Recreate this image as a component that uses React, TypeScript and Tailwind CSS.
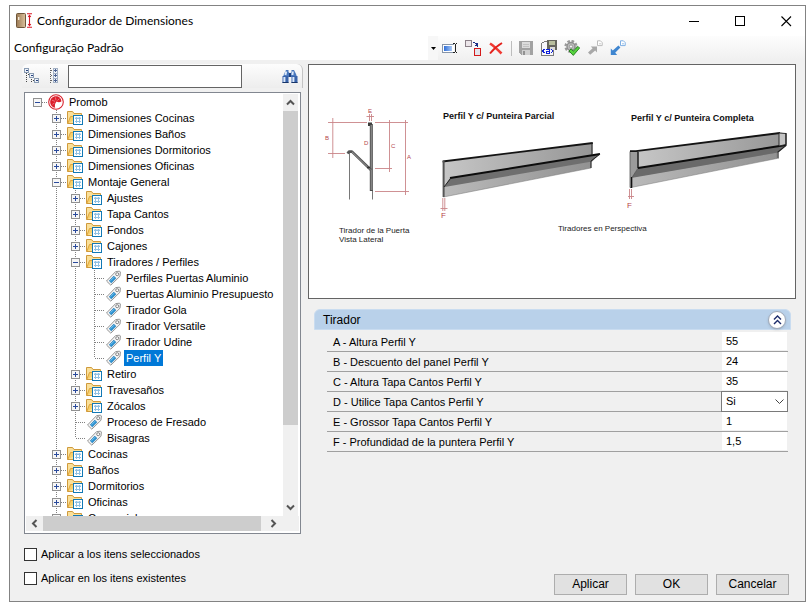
import React from "react";

type Kind = "root" | "folder" | "tag";

interface TreeRow {
  label: string;
  depth: number;
  kind: Kind;
  toggle?: "+" | "-";
  // For each level from 0 to depth: does its line go on below this row?
  rails: boolean[];
  selected?: boolean;
}

const ROWS: TreeRow[] = [
  { label: "Promob", depth: 0, kind: "root", toggle: "-", rails: [false] },
  { label: "Dimensiones Cocinas", depth: 1, kind: "folder", toggle: "+", rails: [false, true] },
  { label: "Dimensiones Baños", depth: 1, kind: "folder", toggle: "+", rails: [false, true] },
  { label: "Dimensiones Dormitorios", depth: 1, kind: "folder", toggle: "+", rails: [false, true] },
  { label: "Dimensiones Oficinas", depth: 1, kind: "folder", toggle: "+", rails: [false, true] },
  { label: "Montaje General", depth: 1, kind: "folder", toggle: "-", rails: [false, true] },
  { label: "Ajustes", depth: 2, kind: "folder", toggle: "+", rails: [false, true, true] },
  { label: "Tapa Cantos", depth: 2, kind: "folder", toggle: "+", rails: [false, true, true] },
  { label: "Fondos", depth: 2, kind: "folder", toggle: "+", rails: [false, true, true] },
  { label: "Cajones", depth: 2, kind: "folder", toggle: "+", rails: [false, true, true] },
  { label: "Tiradores / Perfiles", depth: 2, kind: "folder", toggle: "-", rails: [false, true, true] },
  { label: "Perfiles Puertas Aluminio", depth: 3, kind: "tag", rails: [false, true, true, true] },
  { label: "Puertas Aluminio Presupuesto", depth: 3, kind: "tag", rails: [false, true, true, true] },
  { label: "Tirador Gola", depth: 3, kind: "tag", rails: [false, true, true, true] },
  { label: "Tirador Versatile", depth: 3, kind: "tag", rails: [false, true, true, true] },
  { label: "Tirador Udine", depth: 3, kind: "tag", rails: [false, true, true, true] },
  { label: "Perfil Y", depth: 3, kind: "tag", rails: [false, true, true, false], selected: true },
  { label: "Retiro", depth: 2, kind: "folder", toggle: "+", rails: [false, true, true] },
  { label: "Travesaños", depth: 2, kind: "folder", toggle: "+", rails: [false, true, true] },
  { label: "Zócalos", depth: 2, kind: "folder", toggle: "+", rails: [false, true, true] },
  { label: "Proceso de Fresado", depth: 2, kind: "tag", rails: [false, true, true] },
  { label: "Bisagras", depth: 2, kind: "tag", rails: [false, true, false] },
  { label: "Cocinas", depth: 1, kind: "folder", toggle: "+", rails: [false, true] },
  { label: "Baños", depth: 1, kind: "folder", toggle: "+", rails: [false, true] },
  { label: "Dormitorios", depth: 1, kind: "folder", toggle: "+", rails: [false, true] },
  { label: "Oficinas", depth: 1, kind: "folder", toggle: "+", rails: [false, true] },
  { label: "Comercial", depth: 1, kind: "folder", toggle: "+", rails: [false, true] },
];

const FIELDS = [
  { id: "a", label: "A - Altura Perfil Y", value: "55" },
  { id: "b", label: "B - Descuento del panel Perfil Y", value: "24" },
  { id: "c", label: "C - Altura Tapa Cantos Perfil Y", value: "35" },
  { id: "d", label: "D - Utilice Tapa Cantos Perfil Y", value: "Si", options: ["Si", "No"] },
  { id: "e", label: "E - Grossor Tapa Cantos Perfil Y", value: "1" },
  { id: "f", label: "F - Profundidad de la puntera Perfil Y", value: "1,5" },
];

/* ---------- tree ---------- */

function Rail({ row, level }: { row: TreeRow; level: number }) {
  const own = level === row.depth;
  const below = row.rails[level];
  return (
    <svg width="19" height="16" className="shrink-0" shapeRendering="crispEdges">
      <g stroke="#808080" strokeDasharray="1 1">
        {(below || own) && level > 0 && <path d={below ? "M9.5 0V16" : "M9.5 0V8"} />}
        {own && <path d="M10 8.5H19" />}
      </g>
      {own && row.toggle && (
        <g>
          <rect x="5.5" y="4.5" width="8" height="8" fill="#f6f6f6" stroke="#919191" />
          <path d={row.toggle === "+" ? "M7 8.5H12M9.5 6V11" : "M7 8.5H12"} stroke="#2a4a9c" />
        </g>
      )}
    </svg>
  );
}

function RootIcon() {
  return (
    <svg width="20" height="16" viewBox="0 0 20 16">
      <circle cx="9" cy="8" r="7.3" fill="#fff" stroke="#d8232e" strokeWidth="1.1" />
      <path d="M9.6 7.6C11.2 8.6 12.8 8.4 14.4 7.6C14.4 4.2 12 2.2 9 2.2C5.6 2.2 3.2 4.8 3.2 8C3.2 11 5.2 13.4 8.2 13.8C7.6 12 7.8 9.4 9.6 7.6Z" fill="#dc1f2c" />
      <path d="M5 6.2L8 7.4M8.4 3.4L9 6.4M5.4 10.4L7.6 9M12.4 4.6L10.4 6.6" stroke="#f3949b" strokeWidth="0.7" />
    </svg>
  );
}

function FolderIcon() {
  return (
    <svg width="20" height="16" viewBox="0 0 20 16">
      <path d="M1.5 13.5V1.5H7L8.5 3.5H15V13.5Z" fill="#fae09a" />
      <path d="M1.5 13.5V1.5H6.5L8 3.5H15.5V6" fill="none" stroke="#cf9a3c" />
      <path d="M1.8 13.5L4.5 6.5H9L10.5 5.5H16" fill="#f7cf6a" stroke="#dfa63f" />
      <path d="M1.5 13.5H8" stroke="#cf9a3c" />
      <rect x="7.5" y="5.5" width="9" height="9" fill="#fff" stroke="#1279b5" />
      <path d="M9 7.5H15" stroke="#cfe3f3" />
      <path d="M9 8.5H15M9 11.5H15M10.5 7V13M13.5 7V13" stroke="#8fc1e4" />
    </svg>
  );
}

function TagIcon() {
  return (
    <svg width="20" height="16" viewBox="0 0 20 16">
      <path d="M2.5 11L11.6 1.6L15.6 1.2L16.4 2L16 6.2L6.8 15.2Z" fill="#f4f4f4" stroke="#8a8a8a" strokeWidth="0.9" />
      <path d="M5.2 10.8L9.8 6.1L12 8.3L7.3 12.9Z" fill="#2b93d3" stroke="#1d6fa8" strokeWidth="0.5" />
      <path d="M6.6 10.6L10 7.2" stroke="#8fd0f4" strokeWidth="0.8" />
      <circle cx="13.2" cy="4.2" r="1.5" fill="#fff" stroke="#777" strokeWidth="0.9" />
    </svg>
  );
}

function TreeItem({ row }: { row: TreeRow }) {
  return (
    <li className="flex h-4 items-center" role="treeitem" aria-level={row.depth + 1} aria-selected={!!row.selected}>
      {row.rails.map((_, level) => (
        <Rail key={level} row={row} level={level} />
      ))}
      {row.kind === "root" ? <RootIcon /> : row.kind === "folder" ? <FolderIcon /> : <TagIcon />}
      <span className={row.selected ? "h-4 bg-[#0078d7] px-0.5 leading-4 whitespace-nowrap text-white" : "h-4 px-0.5 leading-4 whitespace-nowrap"}>
        {row.label}
      </span>
    </li>
  );
}

function Arrow({ d }: { d: string }) {
  return (
    <svg width="9" height="9" viewBox="0 0 9 9" fill="none" stroke="#555" strokeWidth="2">
      <path d={d} />
    </svg>
  );
}

function Tree() {
  return (
    <div className="mx-0.5 mt-1 flex min-h-0 flex-1 flex-col border border-[#828790] bg-white p-px pb-0.5">
      <div className="flex min-h-0 flex-1">
        <ul className="min-w-0 flex-1 overflow-hidden pl-0.5" role="tree">
          {ROWS.map((row) => (
            <TreeItem key={row.label} row={row} />
          ))}
        </ul>
        <div className="mr-px flex w-[15px] flex-col items-center bg-[#f0f0f0]">
          <button aria-label="Subir" className="flex h-[17px] w-full items-center justify-center"><Arrow d="M1 6.5L4.5 3L8 6.5" /></button>
          <div className="w-full flex-[314] bg-[#cdcdcd]" />
          <div className="flex-[74]" />
          <button aria-label="Bajar" className="flex h-[17px] w-full items-center justify-center"><Arrow d="M1 2.5L4.5 6L8 2.5" /></button>
        </div>
      </div>
      <div className="flex h-[15px] bg-[#f0f0f0]">
        <button aria-label="Izquierda" className="flex w-[17px] items-center justify-center"><Arrow d="M6.5 1L3 4.5L6.5 8" /></button>
        <div className="flex-1 bg-[#cdcdcd]" />
        <button aria-label="Derecha" className="mr-[14px] flex w-6 items-center justify-center"><Arrow d="M2.5 1L6 4.5L2.5 8" /></button>
      </div>
    </div>
  );
}

/* ---------- toolbar icons ---------- */

function RenameIcon() {
  return (
    <svg width="16" height="16" viewBox="0 0 16 16" shapeRendering="crispEdges">
      <defs>
        <linearGradient id="ren" x1="0" x2="1"><stop stopColor="#2f6fd8" /><stop offset="1" stopColor="#a9c8f5" /></linearGradient>
      </defs>
      <path d="M12 4.5H0.5V12.5H12" fill="#fff" stroke="#8795a8" />
      <rect x="2" y="6" width="8" height="5" fill="url(#ren)" />
      <path d="M11 3.5H12.5M13.5 3.5H15M13 4V12M11 12.5H12.5M13.5 12.5H15" stroke="#222" />
    </svg>
  );
}

function ReplaceIcon() {
  return (
    <svg width="16" height="16" viewBox="0 0 16 16" shapeRendering="crispEdges">
      <rect x="0.5" y="0.5" width="6" height="6" fill="#ece6ea" stroke="#8b8088" />
      <rect x="9.5" y="8.5" width="6" height="7" fill="#e4e4ec" stroke="#d31a1a" />
      <path d="M8 2.5H10M10 3.5H12M12.5 3V7M10 5.5H12M11 4.5H13" stroke="#1b2f86" />
    </svg>
  );
}

function DeleteIcon() {
  return (
    <svg width="16" height="16" viewBox="0 0 16 16">
      <path d="M2 3.5C6 6 9.5 9.5 13.5 13.5" stroke="#f03a33" strokeWidth="2.6" fill="none" />
      <path d="M14 3C9.5 5.5 6 8.5 2 13.5" stroke="#e3211c" strokeWidth="2" fill="none" />
    </svg>
  );
}

function SaveIcon() {
  return (
    <svg width="16" height="16" viewBox="0 0 16 16" shapeRendering="crispEdges">
      <path d="M1 1H15V15H3L1 13Z" fill="#a2a2a2" />
      <rect x="4" y="2" width="8" height="6" fill="#dcdcdc" />
      <rect x="4" y="10" width="8" height="5" fill="#d0d0d0" />
      <rect x="5" y="11" width="2" height="4" fill="#929292" />
      <path d="M5 4.5H11M5 6.5H11" stroke="#c2c2c2" />
    </svg>
  );
}

function SaveAsIcon() {
  return (
    <svg width="16" height="16" viewBox="0 0 16 16" shapeRendering="crispEdges">
      <path d="M0.5 3.5L3.5 1.5H12.5V15.5H0.5Z" fill="#f7f7fb" stroke="#7b7b7b" />
      <rect x="6" y="0" width="10" height="10" fill="#66665e" />
      <rect x="8" y="1" width="6" height="4" fill="#b9bf9e" />
      <rect x="9" y="7" width="5" height="3" fill="#dadada" />
      <path d="M3.5 9L1.5 11L3.5 13M5 9.5H8.5V13H5.5V11.5H8.5M10 9L12 11L10 13" fill="none" stroke="#1022d8" />
    </svg>
  );
}

function ApplyIcon() {
  return (
    <svg width="16" height="16" viewBox="0 0 16 16">
      <circle cx="7" cy="6.5" r="5.5" fill="none" stroke="#9a9a9a" strokeWidth="2.2" strokeDasharray="2.6 1.7" />
      <circle cx="7" cy="6.5" r="4" fill="#bdbdbd" stroke="#8e8e8e" strokeWidth="1.4" />
      <circle cx="7" cy="6.5" r="1.6" fill="#f5f5f5" stroke="#808080" strokeWidth="0.7" />
      <path d="M5 11L7.2 8.8L9.2 11.2L14 6.4L15.6 8L9.3 15.4Z" fill="#57d43f" stroke="#237a1c" strokeWidth="0.9" />
    </svg>
  );
}

function PageGlyph({ stroke }: { stroke: string }) {
  return (
    <g>
      <path d="M10.5 0.8H13.4L15.2 2.6V5.6H10.5Z" fill="#fff" stroke={stroke} />
      <path d="M12 3.8H14" stroke={stroke} strokeWidth="0.8" />
    </g>
  );
}

function ExportIcon() {
  return (
    <svg width="16" height="16" viewBox="0 0 16 16">
      <path d="M1 12.4L5.6 8.2L3.8 6.4H10V12.4L8.2 10.6L3.2 14.8Z" fill="#a8a8a8" />
      <PageGlyph stroke="#bcbcbc" />
    </svg>
  );
}

function ImportIcon() {
  return (
    <svg width="16" height="16" viewBox="0 0 16 16">
      <path d="M0.8 15V8.6L2.8 10.4L8.4 5.4L10.4 7.4L5.2 12.8L7.2 15Z" fill="#3f86d0" />
      <PageGlyph stroke="#7fb0e4" />
    </svg>
  );
}

function ToolButton({ label, children }: { label: string; children: React.ReactNode }) {
  return (
    <button aria-label={label} className="flex h-6 w-[23px] shrink-0 items-center justify-center">
      {children}
    </button>
  );
}

/* ---------- title bar ---------- */

function AppIcon() {
  return (
    <svg width="17" height="16" viewBox="0 0 17 16">
      <defs>
        <linearGradient id="door" x1="0" x2="1"><stop stopColor="#9b7a55" /><stop offset="1" stopColor="#dcc29c" /></linearGradient>
      </defs>
      <rect x="0.5" y="0.5" width="9" height="14" rx="1" fill="url(#door)" stroke="#6f563a" />
      <rect x="2" y="4" width="1.4" height="3" fill="#f4ead9" />
      <path d="M11 0.8H16M11 14.2H16M13.5 2V13M12.2 4L13.5 2.4L14.8 4M12.2 11L13.5 12.6L14.8 11" stroke="#d61a26" strokeWidth="1.1" fill="none" />
    </svg>
  );
}

function TitleBar() {
  return (
    <header className="flex h-[30px] shrink-0 items-center bg-white pl-1.5 font-['Lato','Open_Sans',sans-serif] text-xs text-black">
      <AppIcon />
      <h1 className="ml-1 flex-1">Configurador de Dimensiones</h1>
      <div className="flex gap-2">
        <button aria-label="Minimizar" className="flex h-7 w-[38px] items-center justify-center">
          <svg width="11" height="11" shapeRendering="crispEdges"><path d="M0 5.5H10" stroke="#000" /></svg>
        </button>
        <button aria-label="Maximizar" className="flex h-7 w-[38px] items-center justify-center">
          <svg width="11" height="11" shapeRendering="crispEdges"><rect x="0.5" y="0.5" width="9" height="9" fill="none" stroke="#000" /></svg>
        </button>
        <button aria-label="Cerrar" className="flex h-7 w-[38px] items-center justify-center">
          <svg width="11" height="11"><path d="M0.5 0.5L10 10M10 0.5L0.5 10" stroke="#000" strokeWidth="1.1" /></svg>
        </button>
      </div>
    </header>
  );
}

function Toolbar() {
  return (
    <div className="flex h-6 shrink-0 items-center bg-linear-to-b from-[#fdfdfd] to-[#f0f0f0]">
      <div className="relative h-6 w-[428px]">
        <select aria-label="Configuración" className="h-6 w-full appearance-none bg-white pl-1 font-['Lato','Open_Sans',sans-serif] text-xs text-black">
          <option>Configuração Padrão</option>
        </select>
        <span className="pointer-events-none absolute inset-y-0 right-0 flex w-2.5 items-center justify-center bg-[#f7f7f7]">
          <svg width="5" height="3"><path d="M0 0H5L2.5 3Z" fill="#000" /></svg>
        </span>
      </div>
      <ToolButton label="Renombrar"><RenameIcon /></ToolButton>
      <ToolButton label="Reemplazar"><ReplaceIcon /></ToolButton>
      <ToolButton label="Eliminar"><DeleteIcon /></ToolButton>
      <div className="mr-0.5 ml-1 h-[15px] w-px bg-[#bdbdbd]" />
      <ToolButton label="Guardar"><SaveIcon /></ToolButton>
      <ToolButton label="Guardar como"><SaveAsIcon /></ToolButton>
      <ToolButton label="Aplicar configuración"><ApplyIcon /></ToolButton>
      <ToolButton label="Exportar"><ExportIcon /></ToolButton>
      <ToolButton label="Importar"><ImportIcon /></ToolButton>
    </div>
  );
}

/* ---------- left side ---------- */

function CollapseIcon() {
  return (
    <svg width="16" height="16" viewBox="0 0 16 16" shapeRendering="crispEdges" fill="#eef3fa">
      <path d="M2.5 5V15M4 6.5H6M7.5 9V15M9 12.5H11" stroke="#444" strokeDasharray="1 1" />
      <rect x="0.5" y="0.5" width="4" height="4" stroke="#8a9cb3" />
      <rect x="5.5" y="5.5" width="4" height="4" stroke="#8a9cb3" />
      <rect x="10.5" y="10.5" width="4" height="4" stroke="#8a9cb3" />
      <path d="M2 2.5H4M7 7.5H9M12 12.5H14" stroke="#27427e" />
    </svg>
  );
}

function ExpandIcon() {
  return (
    <svg width="10" height="16" viewBox="0 0 10 16" shapeRendering="crispEdges" fill="#eef3fa">
      <path d="M1.5 0V15M2 2.5H4M2 7.5H4M2 12.5H4" stroke="#666" strokeDasharray="1 1" />
      <path d="M4.5 0.5H8.5V14.5H4.5ZM4 5.5H9M4 10.5H9" stroke="#a3b1c4" />
      <path d="M5 2.5H8M6.5 1V4M5 7.5H8M6.5 6V9M5 12.5H8M6.5 11V14" stroke="#4a6090" />
    </svg>
  );
}

function BinocularsIcon() {
  return (
    <svg width="16" height="15" viewBox="0 0 16 15">
      <path d="M2 5L4 1H6.5V3L7.5 4V8H1Z" fill="#4a78bd" />
      <path d="M14 5L12 1H9.5V3L8.5 4V8H15Z" fill="#4a78bd" />
      <path d="M0.5 7H6.5V14H0.5ZM9.5 7H15.5V14H9.5Z" fill="#3a64ab" />
      <path d="M7 4H9V8H7Z" fill="#1e3f7d" />
      <path d="M2.4 8V13M11.4 8V13M4.2 2.5L3.4 6M10.8 2.5L10.4 6" stroke="#dbe8fa" strokeWidth="2" />
      <path d="M0.5 13.5H6.5M9.5 13.5H15.5" stroke="#173468" />
    </svg>
  );
}

function CheckRow({ id, label }: { id: string; label: string }) {
  return (
    <div className="flex h-6 items-center">
      <input id={id} type="checkbox" className="size-[13px] appearance-none border border-[#333] bg-white checked:bg-[#0078d7]" />
      <label htmlFor={id} className="pl-1">{label}</label>
    </div>
  );
}

function LeftPane() {
  return (
    <section className="flex min-h-0 w-[281px] shrink-0 flex-col">
      <div className="flex h-6 shrink-0 items-center rounded-md rounded-b-none border-r border-[#c4c4c4] bg-linear-to-b from-[#fdfdfd] to-[#ededed] pr-1">
        <button aria-label="Contraer todo" className="flex w-5 justify-center"><CollapseIcon /></button>
        <button aria-label="Expandir todo" className="ml-1 flex w-4 justify-center"><ExpandIcon /></button>
        <input aria-label="Buscar" className="ml-1.5 h-[23px] w-[174px] border border-[#646464] bg-white px-1 outline-none" />
        <button aria-label="Buscar siguiente" className="ml-auto"><BinocularsIcon /></button>
      </div>
      <Tree />
      <div className="mt-2 mb-[11px] ml-0.5">
        <CheckRow id="sel" label="Aplicar a los itens seleccionados" />
        <CheckRow id="exi" label="Aplicar en los itens existentes" />
      </div>
    </section>
  );
}

/* ---------- right side ---------- */

function ProfileDrawing() {
  return (
    <svg viewBox="309 65 486 233" className="h-[233px] w-full font-['Liberation_Sans',Arial,sans-serif]" preserveAspectRatio="xMinYMin meet">
      <defs>
        <linearGradient id="plate" x1="0" x2="1"><stop stopColor="#c6c6c6" /><stop offset="1" stopColor="#969696" /></linearGradient>
        <linearGradient id="base" x1="0" x2="1"><stop stopColor="#bababa" /><stop offset="1" stopColor="#929292" /></linearGradient>
      </defs>

      {/* side view: dimension lines */}
      <g stroke="#c98488" strokeWidth="0.9" fill="none">
        <path d="M328 122.5H367M375 122.5H408M332.8 118V158M328 153.5H345" />
        <path d="M389.5 120V172M375 168.5H392M405.5 120V195M375 191.5H409" />
        <path d="M366.5 116.5H374M369.5 114V121M371.5 114V121" />
      </g>
      <g fill="#b5454a" fontSize="6">
        <text x="368" y="113">E</text>
        <text x="325" y="140">B</text>
        <text x="364" y="145">D</text>
        <text x="391" y="148">C</text>
        <text x="407" y="159">A</text>
      </g>

      {/* side view: profile */}
      <path d="M349.5 153V199.5M372.5 190V199.5" stroke="#555" strokeWidth="0.8" />
      <path d="M371.3 124V191" stroke="#4a4a4a" strokeWidth="3" />
      <path d="M371.3 125V190" stroke="#858585" strokeWidth="1.4" />
      <path d="M369 126V123.5H372" stroke="#3c3c3c" strokeWidth="2" fill="none" />
      <path d="M347.5 153.5L349 151.6H352L371 170" stroke="#555" strokeWidth="2.6" fill="none" strokeLinejoin="round" />
      <path d="M352 151.8L370.5 169.8" stroke="#999" strokeWidth="1" />
      <path d="M367 167.5H370" stroke="#333" strokeWidth="1.6" />
      <g fontSize="8" fill="#222">
        <text x="339" y="233">Tirador de la Puerta</text>
        <text x="339" y="242">Vista Lateral</text>
        <text x="558" y="231">Tiradores en Perspectiva</text>
      </g>
      <g fontSize="9" fontWeight="bold" fill="#111">
        <text x="443" y="119">Perfil Y c/ Punteira Parcial</text>
        <text x="631" y="121">Perfil Y c/ Punteira Completa</text>
      </g>

      {/* perspective, partial end cap */}
      <path d="M443 162L592.5 143V161L444 187Z" fill="url(#plate)" />
      <path d="M443.5 186L591 160V168L443.5 197Z" fill="url(#base)" stroke="#777" strokeWidth="0.5" />
      <path d="M450 178L600 154L592 161.5L444.5 187Z" fill="#6f6f6f" />
      <path d="M442.6 161.5L592.8 143" stroke="#141414" strokeWidth="1.8" />
      <path d="M450 178L600 154" stroke="#0c0c0c" strokeWidth="2" />
      <path d="M443.6 161V197" stroke="#555" strokeWidth="2" />
      <path d="M444 187L450.5 178.5M592 143V155M600 154L591 161V168" stroke="#222" strokeWidth="1" fill="none" />
      <path d="M442.8 198V211M444.8 198V211M440.5 208.5H447.5" stroke="#c98488" strokeWidth="0.9" />

      {/* perspective, full end cap */}
      <path d="M637 151L780 132.5L786 133.5V145.5L638 168.5Z" fill="url(#plate)" />
      <path d="M631 177L777 152V158.5L631 187.5Z" fill="url(#base)" stroke="#777" strokeWidth="0.5" />
      <path d="M638 168L786 145L778 152.5L631 178Z" fill="#6a6a6a" />
      <path d="M630 151.5H638V168L632 177.5V187.5H630Z" fill="#9b9b9b" stroke="#555" strokeWidth="0.8" />
      <path d="M630 151.2H636L780 133" stroke="#141414" strokeWidth="1.8" fill="none" />
      <path d="M638 168L786 145" stroke="#0c0c0c" strokeWidth="2" />
      <path d="M638 152V168M631.5 177V188" stroke="#111" strokeWidth="1.2" />
      <path d="M779 133L786 133.5V144.5L779 146Z" fill="#c4c4c4" stroke="#222" strokeWidth="0.9" />
      <path d="M786 133V145.5L778 152V158.5" stroke="#222" strokeWidth="1.2" fill="none" />
      <path d="M629.5 189V199M631.5 189V199M628 196.5H634" stroke="#c98488" strokeWidth="0.9" />
      <g fill="#b5454a" fontSize="8">
        <text x="441" y="218">F</text>
        <text x="627" y="208">F</text>
      </g>
    </svg>
  );
}

function FieldRow({ field }: { field: (typeof FIELDS)[number] }) {
  return (
    <div className="flex h-5 border-b border-[#a0a0a0] pl-1.5">
      <label htmlFor={field.id} className="flex-1 leading-5">{field.label}</label>
      {field.options ? (
        <div className="relative -mt-px h-[21px] w-[67px]">
          <select id={field.id} defaultValue={field.value} className="h-[21px] w-full appearance-none border border-[#7a7a7a] bg-white pl-1">
            {field.options.map((o) => (
              <option key={o}>{o}</option>
            ))}
          </select>
          <svg width="9" height="6" className="pointer-events-none absolute top-2 right-1" fill="none" stroke="#444">
            <path d="M0.5 0.5L4.5 4.5L8.5 0.5" />
          </svg>
        </div>
      ) : (
        <input id={field.id} defaultValue={field.value} className="mx-px h-[18px] w-[65px] bg-white pl-1 outline-none" />
      )}
    </div>
  );
}

function RightPane() {
  return (
    <section className="flex min-h-0 min-w-0 flex-1 flex-col">
      <div className="shrink-0 border border-[#646464] bg-white">
        <ProfileDrawing />
      </div>
      <div className="mt-2.5 mr-[5px] ml-1.5 flex h-[21px] shrink-0 items-center rounded-t-md border border-[#c9dcf0] bg-[#b9d1ea] pr-1 pl-2">
        <h2 className="flex-1 text-xs">Tirador</h2>
        <button aria-label="Contraer sección" className="flex size-[18px] items-center justify-center rounded-full border border-[#9fa9b8] bg-white shadow-sm">
          <svg width="9" height="10" viewBox="0 0 9 10" fill="none" stroke="#1d2c6b" strokeWidth="1.4">
            <path d="M1 4.5L4.5 1L8 4.5M1 9L4.5 5.5L8 9" />
          </svg>
        </button>
      </div>
      <div className="mt-0.5 mr-2 ml-[19px]">
        {FIELDS.map((field) => (
          <FieldRow key={field.id} field={field} />
        ))}
      </div>
      <div className="mt-auto mr-[7px] mb-1.5 flex justify-end gap-2">
        {["Aplicar", "OK", "Cancelar"].map((label) => (
          <button key={label} className="h-[21px] w-[73px] border border-[#adadad] bg-[#e1e1e1] text-xs leading-[19px]">
            {label}
          </button>
        ))}
      </div>
    </section>
  );
}

export default function App() {
  return (
    <div className="flex h-screen flex-col bg-white pt-[5px] pr-1.5 pb-[5px] pl-[9px] font-['Liberation_Sans',Arial,sans-serif] text-[11px] text-black">
      <div className="flex min-h-0 flex-1 flex-col border border-[#838383] bg-[#f0f0f0]">
        <TitleBar />
        <Toolbar />
        <main className="flex min-h-0 flex-1 gap-[5px] pt-1 pr-[9px] pl-3">
          <LeftPane />
          <RightPane />
        </main>
      </div>
    </div>
  );
}
